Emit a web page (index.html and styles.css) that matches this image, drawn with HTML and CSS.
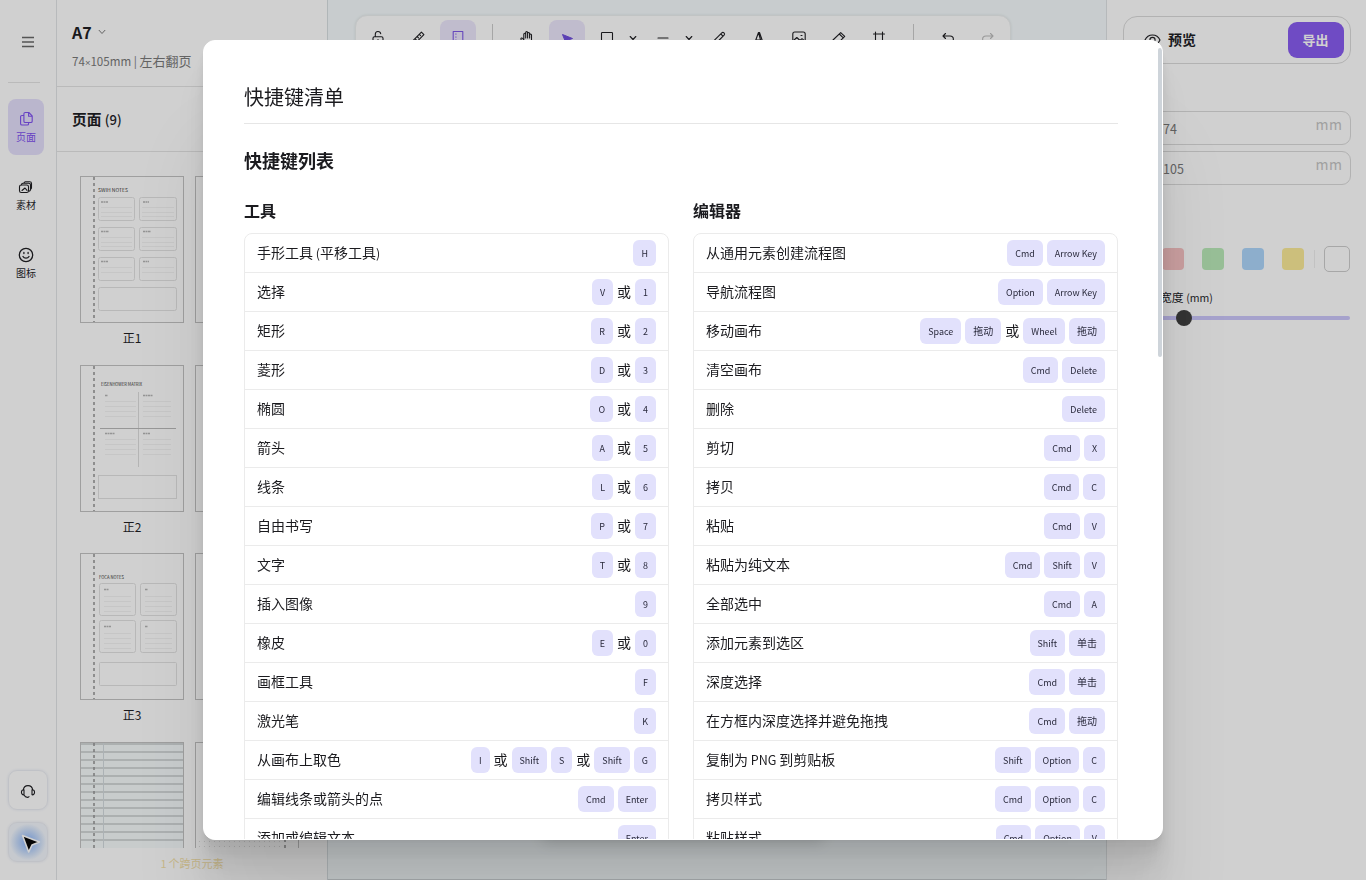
FILE: index.html
```html
<!DOCTYPE html>
<html lang="zh-CN">
<head>
<meta charset="utf-8">
<title>快捷键清单</title>
<link rel="stylesheet" href="styles.css">
</head>
<body>
<div class="app">
  <nav class="rail">
    <div class="rail-menu"><svg width="12" height="12" viewBox="0 0 12 12"><path d="M0 1.500h12M0 6h12M0 10.500h12" stroke="#666" stroke-width="1.500"/></svg></div>
    <div class="rail-line"></div>
    <div class="rail-item active"><svg class="ico" width="16" height="16" viewBox="0 0 16 16"><path d="M7.2 1.5h3.6l3.4 3.4v5.3c0 .8-.5 1.3-1.3 1.3H7.2c-.8 0-1.3-.5-1.3-1.3V2.8c0-.8.5-1.3 1.3-1.3zM10.6 1.7v3.5H14M5.7 4.5H3.9c-.8 0-1.3.5-1.3 1.3v6.9c0 .8.5 1.3 1.3 1.3h5.4c.8 0 1.3-.5 1.3-1.3v-1"/></svg><span>页面</span></div>
    <div class="rail-item"><svg class="ico" width="16" height="16" viewBox="0 0 16 16"><rect x="1.500" y="6" width="9" height="7.500" rx="1.800"/><path d="M3.500 5.800c0-1 .5-1.500 1.500-1.500h5.800c1.100 0 1.700.6 1.700 1.700v4.600c0 .9-.4 1.400-1.300 1.500M6 3.800c.2-.8.6-1.100 1.400-1.100h4.300c1.200 0 1.800.6 1.800 1.800v4.200c0 .7-.2 1-.6 1.200M4 11.500l3-2.500 2 2.300"/></svg><span>素材</span></div>
    <div class="rail-item"><svg class="ico face" width="16" height="16" viewBox="0 0 16 16"><circle cx="8" cy="8" r="6.700"/><path d="M5 9.500c1.200 2.200 4.800 2.200 6 0M5.900 5.500v1M10.100 5.500v1"/></svg><span>图标</span></div>
    <div class="rail-bottom">
      <div class="rail-button"><svg class="ico" width="16" height="16" viewBox="0 0 16 16"><path d="M3.300 7C4 1.200 12 1.200 12.700 7M4 6.800v5c-3.400.6-3.400-5.600 0-5zM12 6.800v5c3.400.6 3.400-5.600 0-5zM4 12c.8 1.600 2.200 2.500 4.200 2.300l.8-.7"/></svg></div>
      <div class="rail-button glow"><svg class="pointer" width="22" height="22" viewBox="0 0 22 22"><path d="M3.500 3.500L20.500 10 13 13l-3.300 7z" fill="#000" stroke="#fff" stroke-width="1.600" stroke-linejoin="round"/></svg></div>
    </div>
  </nav>

  <aside class="pages">
    <header class="book">
      <div class="book-title">A7 <svg width="8" height="6" viewBox="0 0 8 6"><path d="M.8 1L4 4.500 7.200 1" fill="none" stroke="#777"/></svg></div>
      <div class="book-sub"><span class="lat">74<span class="times">×</span>105mm | </span>左右翻页</div>
    </header>
    <div class="pages-title">页面 <span class="lat">(9)</span></div>
    <div class="thumbs">
      <div class="thumb">
        <svg width="104" height="147" viewBox="0 0 104 147"><rect class="pg" x=".5" y=".5" width="103" height="146"/><path class="bind" d="M14 1v145"/><text class="tt" x="18" y="15.500" textLength="30" lengthAdjust="spacingAndGlyphs">SWIH NOTES</text>
          <g class="box"><rect x="18.500" y="21.500" width="36" height="23" rx="2"/><rect x="59.500" y="21.500" width="37" height="23" rx="2"/><rect x="18.500" y="51.500" width="36" height="23" rx="2"/><rect x="59.500" y="51.500" width="37" height="23" rx="2"/><rect x="18.500" y="81.500" width="36" height="23" rx="2"/><rect x="59.500" y="81.500" width="37" height="23" rx="2"/><rect x="18.500" y="111.500" width="78" height="23" rx="2"/></g>
          <path class="ruled" d="M21 31.500h31M21 36.500h31M21 40.500h31M62 31.500h32M62 36.500h32M62 40.500h32M21 61.500h31M21 66.500h31M21 70.500h31M62 61.500h32M62 66.500h32M62 70.500h32M21 91.500h31M21 96.500h31M62 91.500h32M62 96.500h32"/>
          <path class="mini" d="M21 26h7M63 26h6M21 55.500h8M63 55.500h8M21 85.500h7M63 85.500h6"/></svg>
        <span>正1</span></div>
      <div class="thumb"><svg width="104" height="147"><rect class="pg" x=".5" y=".5" width="103" height="146"/></svg></div>
      <div class="thumb">
        <svg width="104" height="147" viewBox="0 0 104 147"><rect class="pg" x=".5" y=".5" width="103" height="146"/><path class="bind" d="M14 1v145"/><text class="tt" x="21" y="20.500" textLength="41" lengthAdjust="spacingAndGlyphs">EISENHOWER MATRIX</text>
          <path d="M58.500 27v75" stroke="#dcdcdc"/><path d="M20 63.500h76" stroke="#b8b8b8"/><rect class="softbox" x="18.500" y="110.500" width="78" height="23"/>
          <path class="ruled" d="M25 36.500h31M25 41.500h31M25 46.500h31M25 51.500h31M63 36.500h28M63 41.500h28M63 46.500h28M63 51.500h28M25 74.500h31M25 79.500h31M25 84.500h31M25 89.500h31M63 74.500h28M63 79.500h28M63 84.500h28M63 89.500h28"/>
          <path class="mini" d="M25 30.500h3M63 30.500h10M25 68.500h10M63 68.500h7"/></svg>
        <span>正2</span></div>
      <div class="thumb"><svg width="104" height="147"><rect class="pg" x=".5" y=".5" width="103" height="146"/></svg></div>
      <div class="thumb">
        <svg width="104" height="147" viewBox="0 0 104 147"><rect class="pg" x=".5" y=".5" width="103" height="146"/><path class="bind" d="M14 1v145"/><text class="tt" x="19" y="25.500" textLength="25" lengthAdjust="spacingAndGlyphs">FOCA NOTES</text>
          <g class="box"><rect x="19.500" y="30.500" width="36" height="32" rx="2"/><rect x="60.500" y="30.500" width="36" height="32" rx="2"/><rect x="19.500" y="67.500" width="36" height="32" rx="2"/><rect x="60.500" y="67.500" width="36" height="32" rx="2"/><rect x="19.500" y="109.500" width="77" height="23" rx="1"/></g>
          <path class="ruled" d="M24 43.500h27M24 48.500h27M24 53.500h27M24 58.500h27M65 43.500h27M65 48.500h27M65 53.500h27M65 58.500h27M24 80.500h27M24 85.500h27M24 90.500h27M24 95.500h27M65 80.500h27M65 85.500h27M65 90.500h27M65 95.500h27"/>
          <path class="mini" d="M24 36.500h5M65 36.500h3M24 73.500h7M65 73.500h3"/></svg>
        <span>正3</span></div>
      <div class="thumb"><svg width="104" height="147"><rect class="pg" x=".5" y=".5" width="103" height="146"/></svg></div>
      <div class="thumb">
        <svg width="104" height="147" viewBox="0 0 104 147"><rect class="pg tint" x=".5" y=".5" width="103" height="146"/><path d="M1 2h102M1 10h102M1 18h102M1 26h102M1 34h102M1 42h102M1 50h102M1 58h102M1 66h102M1 74h102M1 82h102M1 90h102M1 98h102" stroke="#c6cbcd" stroke-width="1.300"/><path d="M23.500 1v145" stroke="#d2dade"/><path class="bind" d="M14 1v145"/></svg></div>
      <div class="thumb"><svg width="104" height="147"><rect class="pg" x=".5" y=".5" width="103" height="146"/><path class="bind" d="M90 1v145"/><path d="M4 99.500h84M4 104.500h84" stroke="#ddd" stroke-dasharray="1 4"/></svg></div>
    </div>
    <footer class="pages-foot"><span class="one">1</span>个跨页元素</footer>
  </aside>

  <main class="canvas">
    <div class="toolbar">
      <i class="tool"><svg class="ico" width="16" height="16" viewBox="0 0 16 16"><rect x="3" y="6.800" width="10" height="7.200" rx="1.500"/><path d="M5.300 6.500V4.200c0-3.600 5-3.600 5.400-.4M8 9.500v1.800"/></svg></i>
      <i class="tool"><svg class="ico" width="16" height="16" viewBox="0 0 16 16"><path d="M2 11.700L11.400 2.200l2.500 2.500-9.400 9.400zM9.300 4.300l1.300 1.300M7.200 6.500l1.300 1.300M5 8.700l1.300 1.300"/></svg></i>
      <i class="tool on"><svg class="ico" width="16" height="16" viewBox="0 0 16 16"><rect x="3.200" y="1.500" width="9.600" height="13"/><path d="M5.700 4h.4M5.700 7h.4M5.700 10h.4"/></svg></i>
      <i class="sep"></i>
      <i class="tool"><svg class="ico" width="16" height="16" viewBox="0 0 16 16"><path d="M4.800 9.500V4.200c0-1.300 1.900-1.300 1.900 0V8M6.700 4V2.500c0-1.300 1.900-1.300 1.900 0V8M8.600 3.500c0-1.400 2-1.400 2 0V8M10.600 5c0-1.300 1.900-1.300 1.900 0v5c0 6-6.500 5.500-7.800 3L2 9.500c-.5-1.500 1-2 1.700-1l1.100 1.300"/></svg></i>
      <i class="tool on"><svg width="16" height="16" viewBox="0 0 16 16"><path d="M3.500 4.500l10 4-4.300 1.600-1.800 4z" fill="#6d4bdc" stroke="#6d4bdc" stroke-linejoin="round"/></svg></i>
      <i class="tool"><svg class="ico" width="16" height="16" viewBox="0 0 16 16"><rect x="2.500" y="2.500" width="11" height="11" rx=".7"/></svg></i>
      <i class="drop"><svg class="ico" width="8" height="6" viewBox="0 0 8 6"><path d="M1.200 1.500L4 4.500l2.800-3"/></svg></i>
      <i class="tool"><svg class="ico" width="16" height="16" viewBox="0 0 16 16"><path d="M3 8h10"/></svg></i>
      <i class="drop"><svg class="ico" width="8" height="6" viewBox="0 0 8 6"><path d="M1.200 1.500L4 4.500l2.800-3"/></svg></i>
      <i class="tool"><svg class="ico" width="16" height="16" viewBox="0 0 16 16"><path d="M2 14l.5-2.800 8.300-8.300c1.400-1.400 3.700.8 2.300 2.300l-8.300 8.300zM9.800 4l2.200 2.200"/></svg></i>
      <i class="tool"><svg class="ico" width="16" height="16" viewBox="0 0 16 16"><path d="M3.500 13.500L7.500 2.500h1l3.800 11M7.500 2.500l3 11M5 10h5M2.500 13.500h2.500M10 13.500h3.500"/></svg></i>
      <i class="tool"><svg class="ico" width="16" height="16" viewBox="0 0 16 16"><rect x="1.800" y="2" width="12.400" height="12" rx="2"/><path d="M2 11l3.800-3.500 3.200 3 2-1.800 3 2.500M10 5.500h1"/></svg></i>
      <i class="tool"><svg class="ico" width="16" height="16" viewBox="0 0 16 16"><path d="M2 10L9.700 2.600l4 3.800L6.500 13.700H4.800L2 11zM8.300 4l4 3.800"/></svg></i>
      <i class="tool"><svg class="ico" width="16" height="16" viewBox="0 0 16 16"><path d="M2.500 4h11M2.500 12h11M4.500 2v12M11.500 2v12"/></svg></i>
      <i class="sep"></i>
      <i class="tool"><svg class="ico" width="16" height="16" viewBox="0 0 16 16"><path d="M5.500 3.500L3 6l2.500 2.500M3.300 6H10c4.500 0 4.500 6.300 0 6.300H9"/></svg></i>
      <i class="tool dim"><svg class="ico" width="16" height="16" viewBox="0 0 16 16"><path d="M10.500 3.500L13 6l-2.500 2.500M12.700 6H6c-4.500 0-4.500 6.300 0 6.300h1"/></svg></i>
    </div>
    <div class="paper"></div>
  </main>

  <aside class="props">
    <div class="preview">
      <svg class="ico eye" width="17" height="14" viewBox="0 0 17 14"><path d="M1 7c3-6.700 12-6.700 15 0-3 6.700-12 6.700-15 0z"/><circle cx="8.500" cy="7" r="2.600"/></svg>
      <b>预览</b><span class="export">导出</span>
    </div>
    <div class="field"><span>74</span><em>mm</em></div>
    <div class="field"><span>105</span><em>mm</em></div>
    <div class="swatches"><i class="sw red"></i><i class="sw green"></i><i class="sw blue"></i><i class="sw yellow"></i><i class="sw-line"></i><i class="sw-current"></i></div>
    <div class="stroke-label">宽度 <span class="lat">(mm)</span></div>
    <div class="slider"><i class="knob"></i></div>
  </aside>
</div>

<div class="overlay">
  <div class="dialog">
    <div class="dialog-body">
      <h2>快捷键清单</h2>
      <h3>快捷键列表</h3>
      <div class="columns">
        <section>
          <h4>工具</h4>
          <div class="list">
            <div class="row"><p>手形工具<span class="lat"> (</span>平移工具<span class="lat">)</span></p><div class="keys"><kbd>H</kbd></div></div>
            <div class="row"><p>选择</p><div class="keys"><kbd>V</kbd><p>或</p><kbd>1</kbd></div></div>
            <div class="row"><p>矩形</p><div class="keys"><kbd>R</kbd><p>或</p><kbd>2</kbd></div></div>
            <div class="row"><p>菱形</p><div class="keys"><kbd>D</kbd><p>或</p><kbd>3</kbd></div></div>
            <div class="row"><p>椭圆</p><div class="keys"><kbd>O</kbd><p>或</p><kbd>4</kbd></div></div>
            <div class="row"><p>箭头</p><div class="keys"><kbd>A</kbd><p>或</p><kbd>5</kbd></div></div>
            <div class="row"><p>线条</p><div class="keys"><kbd>L</kbd><p>或</p><kbd>6</kbd></div></div>
            <div class="row"><p>自由书写</p><div class="keys"><kbd>P</kbd><p>或</p><kbd>7</kbd></div></div>
            <div class="row"><p>文字</p><div class="keys"><kbd>T</kbd><p>或</p><kbd>8</kbd></div></div>
            <div class="row"><p>插入图像</p><div class="keys"><kbd>9</kbd></div></div>
            <div class="row"><p>橡皮</p><div class="keys"><kbd>E</kbd><p>或</p><kbd>0</kbd></div></div>
            <div class="row"><p>画框工具</p><div class="keys"><kbd>F</kbd></div></div>
            <div class="row"><p>激光笔</p><div class="keys"><kbd>K</kbd></div></div>
            <div class="row"><p>从画布上取色</p><div class="keys"><kbd>I</kbd><p>或</p><kbd>Shift</kbd><kbd>S</kbd><p>或</p><kbd>Shift</kbd><kbd>G</kbd></div></div>
            <div class="row"><p>编辑线条或箭头的点</p><div class="keys"><kbd>Cmd</kbd><kbd>Enter</kbd></div></div>
            <div class="row"><p>添加或编辑文本</p><div class="keys"><kbd>Enter</kbd></div></div>
          </div>
        </section>
        <section>
          <h4>编辑器</h4>
          <div class="list">
            <div class="row"><p>从通用元素创建流程图</p><div class="keys"><kbd>Cmd</kbd><kbd>Arrow Key</kbd></div></div>
            <div class="row"><p>导航流程图</p><div class="keys"><kbd>Option</kbd><kbd>Arrow Key</kbd></div></div>
            <div class="row"><p>移动画布</p><div class="keys"><kbd>Space</kbd><kbd class="zh">拖动</kbd><p>或</p><kbd>Wheel</kbd><kbd class="zh">拖动</kbd></div></div>
            <div class="row"><p>清空画布</p><div class="keys"><kbd>Cmd</kbd><kbd>Delete</kbd></div></div>
            <div class="row"><p>删除</p><div class="keys"><kbd>Delete</kbd></div></div>
            <div class="row"><p>剪切</p><div class="keys"><kbd>Cmd</kbd><kbd>X</kbd></div></div>
            <div class="row"><p>拷贝</p><div class="keys"><kbd>Cmd</kbd><kbd>C</kbd></div></div>
            <div class="row"><p>粘贴</p><div class="keys"><kbd>Cmd</kbd><kbd>V</kbd></div></div>
            <div class="row"><p>粘贴为纯文本</p><div class="keys"><kbd>Cmd</kbd><kbd>Shift</kbd><kbd>V</kbd></div></div>
            <div class="row"><p>全部选中</p><div class="keys"><kbd>Cmd</kbd><kbd>A</kbd></div></div>
            <div class="row"><p>添加元素到选区</p><div class="keys"><kbd>Shift</kbd><kbd class="zh">单击</kbd></div></div>
            <div class="row"><p>深度选择</p><div class="keys"><kbd>Cmd</kbd><kbd class="zh">单击</kbd></div></div>
            <div class="row"><p>在方框内深度选择并避免拖拽</p><div class="keys"><kbd>Cmd</kbd><kbd class="zh">拖动</kbd></div></div>
            <div class="row"><p>复制为<span class="lat"> PNG </span>到剪贴板</p><div class="keys"><kbd>Shift</kbd><kbd>Option</kbd><kbd>C</kbd></div></div>
            <div class="row"><p>拷贝样式</p><div class="keys"><kbd>Cmd</kbd><kbd>Option</kbd><kbd>C</kbd></div></div>
            <div class="row"><p>粘贴样式</p><div class="keys"><kbd>Cmd</kbd><kbd>Option</kbd><kbd>V</kbd></div></div>
          </div>
        </section>
      </div>
    </div>
    <div class="scrollbar"></div>
  </div>
</div>
</body>
</html>
```
FILE: styles.css
```css
* { box-sizing: border-box; }
body { margin: 0; height: 880px; overflow: hidden; font-family: "Noto Sans CJK SC", sans-serif; font-size: 14px; color: #1b1b1f; }
i, em { font-style: normal; }
p { margin: 0; }
svg { display: block; flex: none; }
.ico { fill: none; stroke: currentColor; stroke-width: 1.1; stroke-linecap: round; stroke-linejoin: round; }
.lat { font-size: .895em; }
.app { display: flex; width: 1366px; height: 880px; background: #fff; }

/* left rail */
.rail { width: 57px; border-right: 1px solid #e2e4e6; display: flex; flex-direction: column; padding: 36px 8px 18px; }
.rail-menu { height: 46px; padding-left: 14px; }
.rail-line { width: 32px; height: 1px; background: #e4e4e4; margin-bottom: 16px; }
.rail-item { width: 36px; height: 56px; border-radius: 8px; margin-bottom: 12px; padding-top: 12px; display: flex; flex-direction: column; align-items: center; gap: 2px; font-size: 10px; line-height: 16px; }
.rail-item.active { background: #e4dffc; color: #7c4df0; }
.face { stroke-width: 1.3; }
.rail-bottom { margin-top: auto; display: flex; flex-direction: column; gap: 12px; }
.rail-button { width: 40px; height: 40px; border: 1px solid #eceef4; border-radius: 9px; display: flex; align-items: center; justify-content: center; padding-top: 2px; box-shadow: 0 0 3px #e8ecf5; }
.rail-button.glow { background: radial-gradient(circle, #8db8ff 5%, #c5dafa 40%, #f3f7fd 68%); }
.pointer { margin-left: 4px; }

/* page list */
.pages { width: 271px; border-right: 1px solid #d8dfe2; display: flex; flex-direction: column; }
.book { height: 87px; border-bottom: 1px solid #e4e4e4; padding: 20px 15px 0; }
.book-title { font-size: 16px; line-height: 24px; font-weight: 700; display: flex; align-items: center; gap: 6px; }
.book-sub { font-size: 13px; line-height: 20px; margin-top: 7px; color: #777; white-space: nowrap; }
.book-sub .lat { font-size: 11.6px; }
.times { font-family: "Liberation Sans", sans-serif; font-size: 9.5px; }
.pages-title { height: 65px; line-height: 63px; border-bottom: 1px solid #e4e4e4; padding-left: 15px; font-size: 14.700px; font-weight: 700; }
.pages-title .lat { font-weight: 500; }
.thumbs { height: 696px; overflow: hidden; padding: 24px 0 0 23px; display: grid; grid-template-columns: 104px 104px; gap: 0 11px; grid-auto-rows: 188.5px; }
.thumb { text-align: center; font-size: 12px; line-height: 18px; }
.thumb span { display: block; margin-top: 6px; }
.pg { fill: #fff; stroke: #c2c2c2; }
.pg.tint { fill: #f5fafb; }
.bind { stroke: #939393; stroke-width: 1.5; stroke-dasharray: 3 3; }
.tt { font-size: 4.600px; fill: #333; }
.box rect, .softbox { fill: none; stroke: #e2e2e2; }
.ruled { stroke: #f3f3f3; }
.mini { stroke: #b4b4b4; stroke-width: 1.5; stroke-dasharray: 2 .5; }
.pages-foot { height: 32px; line-height: 31px; font-size: 11px; color: #f3dfa8; text-align: center; }
.one { margin-right: 2px; }

/* drawing area */
.canvas { width: 778px; background: #f5fbfd; border-bottom: 1px solid #cfd5d8; position: relative; padding: 15px 0 0 27px; }
.toolbar { width: 656px; height: 46px; padding: 4px; border: 1px solid #edf0f1; border-radius: 12px; background: #fff; display: flex; box-shadow: 0 0 3px rgba(0,0,0,.09); }
.tool, .drop { height: 36px; flex: none; display: flex; align-items: center; justify-content: center; }
.tool { width: 36px; margin-right: 4px; border-radius: 8px; }
.tool.on { background: #ece6fc; color: #7b55e6; }
.tool.dim { color: #bbb; }
.drop { width: 16px; margin: 0 4px 0 -4px; }
.sep { flex: none; width: 1px; height: 28px; margin: 4px 16px 0 12px; background: #cbcbcb; }
.paper { position: absolute; left: 215px; bottom: 42px; width: 280px; height: 690px; background: #fff; box-shadow: 0 6px 14px rgba(0,0,0,.12); }

/* properties */
.props { width: 260px; border-left: 1px solid #dfe3e5; padding: 16px 15.5px 0 16px; }
.preview { height: 48px; border: 1px solid #dadada; border-radius: 14px; display: flex; align-items: center; padding: 0 6px 0 20px; }
.preview b { font-size: 14px; margin: 0 auto 2px 7px; }
.export { width: 56px; height: 36px; border-radius: 9px; background: #8659f0; color: #fff; font-size: 13px; font-weight: 700; line-height: 35px; text-align: center; }
.field { height: 34px; margin-top: 6px; border: 1px solid #dadada; border-radius: 9px; display: flex; justify-content: space-between; padding: 0 7px 0 39px; font-size: 12.5px; line-height: 33px; color: #777; }
.preview + .field { margin-top: 47px; }
.field em { font-size: 14px; line-height: 25px; letter-spacing: .5px; color: #c4c4c4; }
.swatches { display: flex; align-items: center; height: 26px; margin: 61px 0 0 39px; }
.sw { width: 22px; height: 22px; border-radius: 4px; margin-right: 17.900px; }
.red { background: #f6c1c2; }
.green { background: #b9eab8; }
.blue { background: #acd5fb; }
.yellow { background: #faea97; }
.sw-line { width: 1px; height: 18px; background: #eee; margin-left: -8px; }
.sw-current { width: 26px; height: 26px; border: 1px solid #ccc; border-radius: 5px; margin: 0 .6px 0 auto; }
.stroke-label { font-size: 11.800px; height: 18px; line-height: 18px; margin: 16px 0 0 37px; }
.slider { height: 4px; margin: 10px .6px 0 0; border-radius: 2px; background: #cbc6fb; position: relative; }
.knob { position: absolute; left: 53px; top: -6px; width: 16px; height: 16px; border-radius: 50%; background: #3d3d3d; }

/* dialog */
.overlay { position: fixed; inset: 0; background: rgba(18,18,18,.2); padding: 40px 203px; }
.dialog { width: 960px; height: 800px; border: 1px solid #fff; border-radius: 12px; background: #fff; overflow: hidden; display: flex; box-shadow: 0 100px 80px rgba(0,0,0,.07), 0 41.800px 33.400px rgba(0,0,0,.05), 0 22.300px 17.900px rgba(0,0,0,.042), 0 12.500px 10px rgba(0,0,0,.035), 0 6.700px 5.300px rgba(0,0,0,.028), 0 2.800px 2.200px rgba(0,0,0,.02); }
.dialog-body { width: 954px; padding: 40px 40px 0; }
.dialog h2 { margin: 0 0 23px; height: 43px; line-height: 32px; font-size: 20px; font-weight: 400; border-bottom: 1px solid #e6e6e6; }
.dialog h3 { margin: 0; font-size: 18px; height: 28px; line-height: 26px; font-weight: 700; }
.dialog h4 { margin: 0; font-size: 16px; height: 24px; line-height: 22px; font-weight: 700; }
.columns { display: grid; grid-template-columns: 1fr 1fr; gap: 24px; margin-top: 24px; }
.list { margin-top: 10px; border: 1px solid #ebebeb; border-radius: 8px; }
.row { height: 39px; padding: 0 12px; border-bottom: 1px solid #ebebeb; display: flex; align-items: center; justify-content: space-between; }
.row p { height: 22px; line-height: 20px; }
.row .lat { line-height: 1; }
.keys { display: flex; align-items: center; gap: 4px; }
kbd { height: 26px; padding: 0 8px; border-radius: 6px; background: #e2e1fc; font-family: inherit; font-size: 8.95px; line-height: 27px; color: #2a2a3c; }
kbd.zh { font-size: 10px; line-height: 26px; }
.scrollbar { width: 4px; height: 309px; margin-top: 7px; border-radius: 2px; background: #ced4da; }
```
